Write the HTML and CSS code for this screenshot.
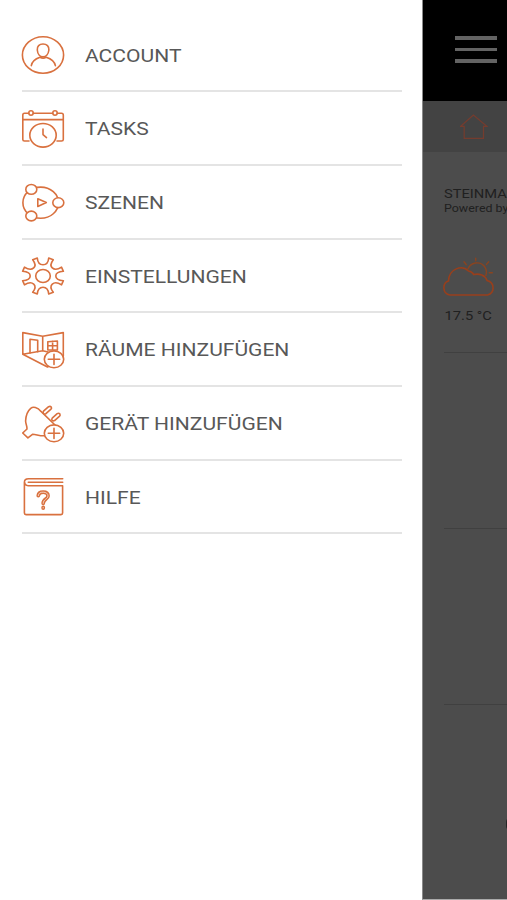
FILE: index.html
```html
<!DOCTYPE html>
<html lang="de">
<head>
    <meta charset="UTF-8">
    <meta name="viewport" content="width=device-width, initial-scale=1.0">
    <title>Menü</title>
    <link rel="stylesheet" href="styles.css">
</head>
<body>
    <div class="app">
        <nav class="drawer">
            <a class="item">
                <svg class="icon" viewBox="0 0 44 44">
                    <ellipse cx="22" cy="22" rx="20.6" ry="18.3"/>
                    <path d="M22 11C18.2 11 16 13.3 16.3 17C16.6 21 19 23.8 22 23.8S27.4 21 27.9 17C28.2 13.3 25.8 11 22 11Z"/>
                    <path d="M10.3 32.7C11 28 14.5 25.7 19 24.2Q22 26 25.2 24.2C30 25.7 33.6 28 34.4 32.7"/>
                </svg>
                <span class="label">ACCOUNT</span>
            </a>
            <a class="item">
                <svg class="icon" viewBox="0 0 44 44">
                    <path d="M8 34H3.5Q1.8 34 1.8 32.5V8Q1.8 6.3 3.5 6.3H7.7M12.3 6.3H31.7M36.3 6.3H40.5Q42.3 6.3 42.3 8V32.5Q42.3 34 40.5 34H36M1.8 12.6H42.3"/>
                    <ellipse cx="10" cy="6" rx="2.2" ry="2.2"/>
                    <ellipse cx="34" cy="6" rx="2.2" ry="2.2"/>
                    <ellipse class="cover" cx="22" cy="28.3" rx="13.2" ry="11.8"/>
                    <path d="M22 22V27.6L25.5 30.6"/>
                </svg>
                <span class="label">TASKS</span>
            </a>
            <a class="item">
                <svg class="icon" viewBox="0 0 44 44">
                    <ellipse cx="19.7" cy="21.7" rx="17.8" ry="15.6"/>
                    <ellipse class="cover" cx="10.3" cy="8.4" rx="5.5" ry="4.9"/>
                    <ellipse class="cover" cx="10.3" cy="35" rx="5.5" ry="4.9"/>
                    <ellipse class="cover" cx="37.3" cy="21.7" rx="5.5" ry="4.9"/>
                    <path d="M16.8 17.7L25.3 21.6L16.8 25.5Z"/>
                </svg>
                <span class="label">SZENEN</span>
            </a>
            <a class="item">
                <svg class="icon" viewBox="0 0 44 44">
                    <path d="M16.3 4Q16.8 10.8 22 10.8Q27.2 10.8 27.7 4L32.3 5.7Q28.2 11 31.3 13.9Q34.5 16.8 40.5 13.2L42.4 17.3Q34.8 17.8 34.8 22Q34.8 26.2 42.4 26.7L40.5 30.8Q34.5 27.2 31.3 30.1Q28.2 33 32.3 38.3L27.7 40Q27.2 33.2 22 33.2Q16.8 33.2 16.3 40L11.7 38.3Q15.8 33 12.7 30.1Q9.5 27.2 3.5 30.8L1.6 26.7Q9.2 26.2 9.2 22Q9.2 17.8 1.6 17.3L3.5 13.2Q9.5 16.8 12.7 13.9Q15.8 11 11.7 5.7Z"/>
                    <ellipse cx="22" cy="22" rx="7.3" ry="6.5"/>
                </svg>
                <span class="label">EINSTELLUNGEN</span>
            </a>
            <a class="item">
                <svg class="icon" viewBox="0 0 44 44">
                    <path d="M42.3 28V4.6L21.7 8.3L1.8 4.6V26.3L26.5 39L30 37M1.8 26.3L21.7 22.8V8.3M21.7 22.8L27 24"/>
                    <path d="M9 25V11.3L16.7 12.3V23.7M26.8 13.8L36.4 13V22H26.8ZM31.6 13.4V22M26.8 17.8H36.4"/>
                    <ellipse class="cover" cx="33" cy="31.3" rx="9.7" ry="8.4"/>
                    <path d="M33 26.2V36.4M27.3 31.3H38.7"/>
                </svg>
                <span class="label">RÄUME HINZUFÜGEN</span>
            </a>
            <a class="item">
                <svg class="icon" viewBox="0 0 44 44">
                    <path d="M34 23L20 9.4C16.5 5 12 4.5 9.7 6.3C6.5 9 4.8 14.4 4.6 19C4.6 22 6.4 24.5 6 27L1.7 31L6.9 35.8L11.5 32.3C15 32.2 18 34 23.5 33.8"/>
                    <path d="M22.5 9.2L27.6 4.7Q29.2 3.9 30.2 5Q31 6.2 30 7.2L24.9 11.7Q23.4 12.3 22.4 11.5Q21.7 10.3 22.5 9.2ZM31.2 16.1L36.2 11.6Q37.8 10.8 38.8 11.9Q39.6 13.1 38.6 14.1L33.6 18.6Q32.1 19.2 31.1 18.4Q30.4 17.2 31.2 16.1Z"/>
                    <ellipse class="cover" cx="33" cy="31.3" rx="9.7" ry="8.4"/>
                    <path d="M33 26.2V36.4M27.3 31.3H38.7"/>
                </svg>
                <span class="label">GERÄT HINZUFÜGEN</span>
            </a>
            <a class="item">
                <svg class="icon" viewBox="0 0 44 44">
                    <path d="M41.7 3.8H7.5Q3.4 3.8 3.4 7.3V38Q3.4 39.6 5 39.6H40Q41.6 39.6 41.6 38V10.7H7.2Q3.6 10.5 3.6 7.3M41.7 7.2H7.3"/>
                    <path class="mark" d="M17.3 20.6C17.5 17.9 19.4 17.2 22.2 17.2C25.2 17.2 27 18.6 27 20.9C27 24.2 22.2 24 22.2 28.3M22.2 32.5V33"/>
                    <path class="mark-inner" d="M17.3 20.6C17.5 17.9 19.4 17.2 22.2 17.2C25.2 17.2 27 18.6 27 20.9C27 24.2 22.2 24 22.2 28.3M22.2 32.5V33"/>
                </svg>
                <span class="label">HILFE</span>
            </a>
        </nav>

        <!-- dimmed page behind the drawer -->
        <main class="page">
            <header class="topbar">
                <div class="burger"><i></i><i></i><i></i></div>
            </header>
            <div class="tabs">
                <svg class="home" viewBox="0 0 28 26">
                    <path d="M4.2 12.3H.7L13.4 1L26.8 12.3H23.5V24.4H4.2Z"/>
                </svg>
            </div>
            <section class="weather">
                <div class="place">STEINMA</div>
                <div class="powered">Powered by</div>
                <svg class="cloud" viewBox="0 0 52 42">
                    <path d="M7 38C-1 36.5-.8 26 5.5 24C6 11.5 19 7.5 25.5 14C28 14.5 30 16 30.7 17.6C36 16 42.5 18.5 44 23.5C52 25.5 52 36 44.5 38Z"/>
                    <path class="sun" d="M24.6 12.5C27.5 5 37 3.8 41.5 9.5Q44.5 13.5 42.8 18.5M32.7 1.3V3.7M21 4.7L23.3 7.7M45.7 4.7L43.5 7.4M46.3 15.8H49.3"/>
                </svg>
                <div class="temp">17.5 °C</div>
            </section>
            <section class="block"></section>
            <section class="block"></section>
            <div class="knob"></div>
        </main>
    </div>
</body>
</html>
```
FILE: styles.css
```css
* {
    box-sizing: border-box;
}
body {
    margin: 0;
    background: #fff;
    font-family: Roboto, "Liberation Sans", sans-serif;
}
.app {
    display: flex;
    width: 507px;
    height: 900px;
    overflow: hidden;
}
.drawer {
    width: 422px;
    flex: none;
    padding: 18.6px 20.5px 0 22px;
    background: #fff;
}
.item {
    display: flex;
    align-items: center;
    height: 73.67px;
    border-bottom: 2px solid #e4e4e4;
}
.icon {
    width: 44px;
    height: 44px;
    flex: none;
    margin: 2px 20px 0 -1px;
    fill: none;
    stroke: #d9713f;
    stroke-width: 1.6;
    stroke-linejoin: round;
    stroke-linecap: round;
}
.icon .cover {
    fill: #fff;
}
.icon .mark {
    stroke-width: 3.8;
}
.icon .mark-inner {
    stroke: #fbe6dc;
    stroke-width: 0.8;
}
.label {
    margin: 2.4px 0 0 0.4px;
    font-size: 18.5px;
    line-height: 24px;
    color: #585858;
    white-space: nowrap;
    transform: scaleX(1.138);
    transform-origin: left center;
}
.page {
    position: relative;
    flex: 1;
    min-width: 0;
    background: #4c4c4c;
    border-left: 1px solid #8a8a8a;
    border-bottom: 1px solid #aaa;
    overflow: hidden;
}
.topbar {
    height: 101px;
    padding: 36px 0 0 31.5px;
    background: #000;
}
.burger {
    display: flex;
    flex-direction: column;
    gap: 8px;
    width: 42px;
}
.burger i {
    height: 3.6px;
    background: #636363;
}
.tabs {
    height: 51px;
    padding: 13px 0 0 37px;
    background: #434343;
}
.home {
    display: block;
    width: 28px;
    height: 26px;
    fill: none;
    stroke: #753c2e;
    stroke-width: 1.2;
}
.weather {
    height: 201px;
    margin-left: 21px;
    padding-top: 34px;
    border-bottom: 1px solid #404040;
    color: #202020;
    white-space: nowrap;
}
.place,
.powered,
.temp {
    transform: scaleX(1.13);
    transform-origin: left center;
}
.place {
    font-size: 13px;
    line-height: 15px;
}
.powered {
    font-size: 11px;
    line-height: 15px;
}
.cloud {
    display: block;
    width: 52px;
    height: 42px;
    margin: 41px 0 0 -1px;
    fill: none;
    stroke: #983f1c;
    stroke-width: 1.6;
    stroke-linecap: round;
}
.cloud .sun {
    stroke: #8a4420;
    stroke-width: 1.4;
}
.temp {
    margin-top: 9px;
    padding-left: 0.5px;
    font-size: 13px;
    line-height: 16px;
}
.block {
    height: 176px;
    margin-left: 21px;
    border-bottom: 1px solid #404040;
}
/* edge of the round button, mostly off screen */
.knob {
    position: absolute;
    left: 83px;
    top: 817px;
    width: 14px;
    height: 14px;
    border-radius: 5px;
    background: #252525;
}
```
